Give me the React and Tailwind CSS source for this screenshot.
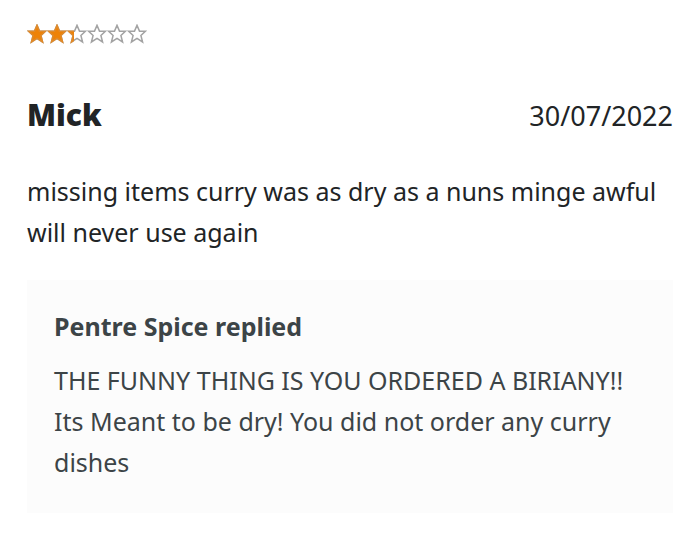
const STAR =
  "M12 1.6l3 7h7.3l-5.6 5.2 2 7.8-6.7-4.3-6.7 4.3 2-7.8-5.6-5.2H9z";

const stars = [
  { id: 1, fill: 100 },
  { id: 2, fill: 100 },
  { id: 3, fill: 35 },
  { id: 4, fill: 0 },
  { id: 5, fill: 0 },
  { id: 6, fill: 0 },
];

const Star = ({ fill }) => (
  <span className="relative block h-5 w-5">
    <svg viewBox="0 0 24 24" className="h-5 w-5">
      <path d={STAR} fill="#ffffff" stroke="#a3a3a3" strokeWidth="1.8" />
    </svg>
    {fill > 0 && (
      <span
        className="absolute inset-y-0 left-0 overflow-hidden"
        style={{ width: `${fill}%` }}
      >
        <svg viewBox="0 0 24 24" className="h-5 w-5 max-w-none">
          <path d={STAR} fill="#ee8207" stroke="#e08a2a" strokeWidth="1.8" />
        </svg>
      </span>
    )}
  </span>
);

const Rating = () => (
  <div className="flex" role="img" aria-label="Rating">
    {stars.map((star) => (
      <Star key={star.id} fill={star.fill} />
    ))}
  </div>
);

const Reply = ({ name, children }) => (
  <section className="mt-[27px] bg-[#fcfcfc] px-[27px] pt-[26px] pb-[30px] text-[#3c4447]">
    <h3 className="text-[25px] leading-[41px] font-bold">{name} replied</h3>
    <p className="mt-[13px] text-[25px] leading-[41px]">{children}</p>
  </section>
);

const App = () => {
  return (
    <article className="min-h-screen bg-white px-[27px] pt-6 pb-5 font-['Noto_Sans',sans-serif] text-[#212426]">
      <Rating />
      <header className="mt-[51px] flex items-baseline justify-between">
        <h2 className="text-[30px] leading-10 font-black">Mick</h2>
        <time dateTime="2022-07-30" className="text-[27px] leading-10">
          30/07/2022
        </time>
      </header>
      <p className="mt-[35px] text-[25px] leading-[41px]">
        missing items curry was as dry as a nuns minge awful will never use
        again
      </p>
      <Reply name="Pentre Spice">
        THE FUNNY THING IS YOU ORDERED A BIRIANY!! Its Meant to be dry! You did
        not order any curry dishes
      </Reply>
    </article>
  );
};

export default App;
